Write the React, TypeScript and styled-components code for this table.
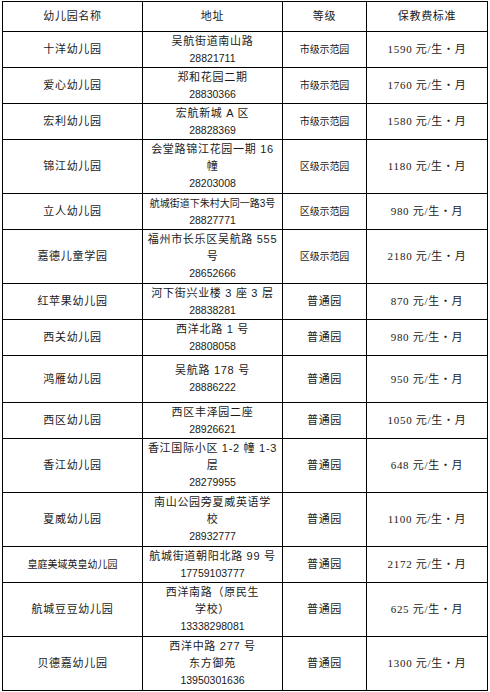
import React from "react";
import styled, { createGlobalStyle } from "styled-components";

type School = {
  name: string;
  address: string[];
  phone: string;
  level: string;
  fee: string;
  height: number;
  tightName?: boolean;
  tightAddress?: boolean;
};

const schools: School[] = [
  { name: "十洋幼儿园", address: ["吴航街道南山路"], phone: "28821711", level: "市级示范园", fee: "1590", height: 36 },
  { name: "爱心幼儿园", address: ["郑和花园二期"], phone: "28830366", level: "市级示范园", fee: "1760", height: 36 },
  { name: "宏利幼儿园", address: ["宏航新城 A 区"], phone: "28828369", level: "市级示范园", fee: "1580", height: 36 },
  { name: "锦江幼儿园", address: ["会堂路锦江花园一期 16", "幢"], phone: "28203008", level: "区级示范园", fee: "1180", height: 54 },
  { name: "立人幼儿园", address: ["航城街道下朱村大同一路3号"], phone: "28827771", level: "区级示范园", fee: "980", height: 36, tightAddress: true },
  { name: "嘉德儿童学园", address: ["福州市长乐区吴航路 555", "号"], phone: "28652666", level: "区级示范园", fee: "2180", height: 54 },
  { name: "红苹果幼儿园", address: ["河下街兴业楼 3 座 3 层"], phone: "28838281", level: "普通园", fee: "870", height: 36 },
  { name: "西关幼儿园", address: ["西洋北路 1 号"], phone: "28808058", level: "普通园", fee: "980", height: 36 },
  { name: "鸿雁幼儿园", address: ["吴航路 178 号"], phone: "28886222", level: "普通园", fee: "950", height: 47 },
  { name: "西区幼儿园", address: ["西区丰泽园二座"], phone: "28926621", level: "普通园", fee: "1050", height: 36 },
  { name: "香江幼儿园", address: ["香江国际小区 1-2 幢 1-3", "层"], phone: "28279955", level: "普通园", fee: "648", height: 54 },
  { name: "夏威幼儿园", address: ["南山公园旁夏威英语学", "校"], phone: "28932777", level: "普通园", fee: "1100", height: 54 },
  { name: "皇庭美域英皇幼儿园", address: ["航城街道朝阳北路 99 号"], phone: "17759103777", level: "普通园", fee: "2172", height: 36, tightName: true },
  { name: "航城豆豆幼儿园", address: ["西洋南路（原民生", "学校）"], phone: "13338298081", level: "普通园", fee: "625", height: 54 },
  { name: "贝德嘉幼儿园", address: ["西洋中路 277 号", "东方御苑"], phone: "13950301636", level: "普通园", fee: "1300", height: 54 },
];

const GlobalStyle = createGlobalStyle`
  body {
    margin: 0;
    background: #fff;
  }
`;

const Page = styled.div`
  padding: 1px 0 0 2px;
`;

const Table = styled.table`
  border-collapse: collapse;
  table-layout: fixed;
  width: 485px;
  color: #1a1a1a;
  font-family: "Liberation Sans", "Noto Sans CJK SC", sans-serif;
  font-size: 11px;
  line-height: 17px;
  letter-spacing: 0.7px;
`;

const Row = styled.tr<{ $h: number }>`
  height: ${(p) => p.$h}px;
`;

const HeadCell = styled.th`
  border: 1px solid #000;
  font-weight: normal;
  text-align: center;
  padding: 0;
`;

const Cell = styled.td<{ $tight?: boolean; $serif?: boolean }>`
  border: 1px solid #000;
  text-align: center;
  vertical-align: middle;
  padding: 0 3px;
  white-space: nowrap;
  font-size: ${(p) => (p.$tight ? "10px" : "11px")};
  letter-spacing: ${(p) => (p.$tight ? "0" : "0.7px")};
  font-family: ${(p) =>
    p.$serif
      ? `"Liberation Serif", "Noto Sans CJK SC", serif`
      : `"Liberation Sans", "Noto Sans CJK SC", sans-serif`};
`;

const Line = styled.div<{ $tight?: boolean }>`
  font-size: ${(p) => (p.$tight ? "10px" : "11px")};
  letter-spacing: ${(p) => (p.$tight ? "0" : "0.7px")};
`;

const Phone = styled.div`
  font-size: 10.5px;
  letter-spacing: 0;
`;

const Level = styled.span<{ $model: boolean }>`
  font-size: ${(p) => (p.$model ? "10px" : "11px")};
  letter-spacing: ${(p) => (p.$model ? "-0.1px" : "0.7px")};
`;

export default function App() {
  return (
    <>
      <GlobalStyle />
      <Page>
        <Table>
          <colgroup>
            <col style={{ width: 140 }} />
            <col style={{ width: 140 }} />
            <col style={{ width: 84 }} />
            <col style={{ width: 121 }} />
          </colgroup>
          <thead>
            <Row $h={30}>
              <HeadCell>幼儿园名称</HeadCell>
              <HeadCell>地址</HeadCell>
              <HeadCell>等级</HeadCell>
              <HeadCell>保教费标准</HeadCell>
            </Row>
          </thead>
          <tbody>
            {schools.map((s) => (
              <Row key={s.name} $h={s.height}>
                <Cell $tight={s.tightName}>{s.name}</Cell>
                <Cell>
                  {s.address.map((line) => (
                    <Line key={line} $tight={s.tightAddress}>
                      {line}
                    </Line>
                  ))}
                  <Phone>{s.phone}</Phone>
                </Cell>
                <Cell>
                  <Level $model={s.level !== "普通园"}>{s.level}</Level>
                </Cell>
                <Cell $serif>{s.fee} 元/生・月</Cell>
              </Row>
            ))}
          </tbody>
        </Table>
      </Page>
    </>
  );
}
